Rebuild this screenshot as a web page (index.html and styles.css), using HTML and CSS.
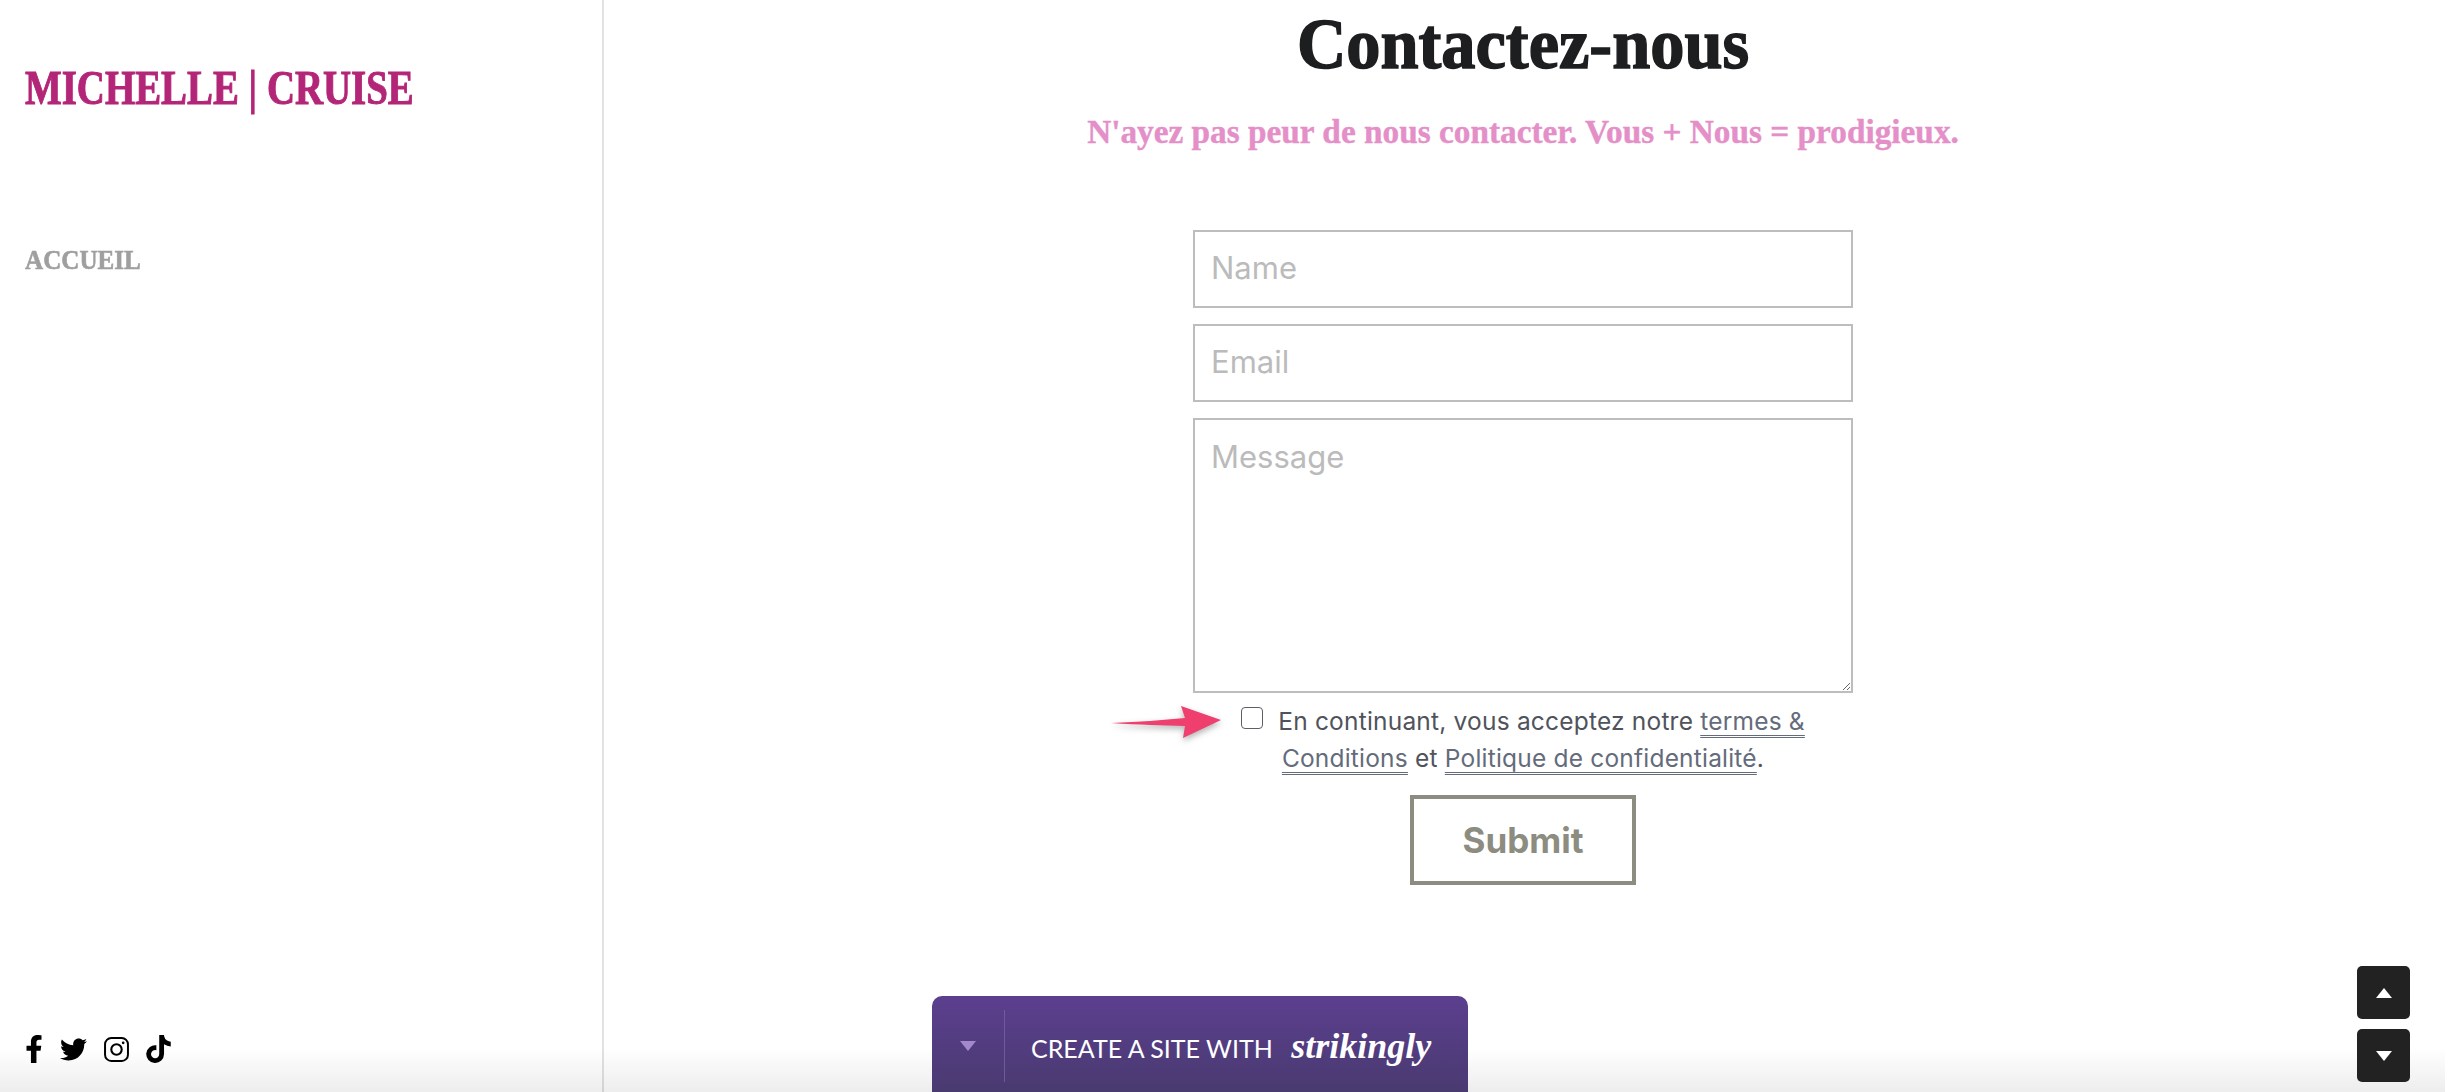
FILE: index.html
```html
<!DOCTYPE html>
<html lang="fr">
<head>
    <meta charset="UTF-8">
    <meta name="viewport" content="width=device-width, initial-scale=1.0">
    <title>Michelle | Cruise - Contactez-nous</title>
    <link rel="stylesheet" href="styles.css">
</head>
<body>

    <div class="page">
        <!-- Sidebar -->
        <aside class="sidebar">
            <div>
                <div class="logo">MICHELLE | CRUISE</div>
                <nav class="nav"><a href="#">ACCUEIL</a></nav>
            </div>
            <div class="social">
                <svg class="icon-fb" viewBox="0 0 320 512"><path d="M279.14 288l14.22-92.66h-88.91v-60.13c0-25.35 12.42-50.06 52.24-50.06h40.42V6.26S260.43 0 225.36 0c-73.22 0-121.08 44.38-121.08 124.72v70.62H22.89V288h81.39v224h100.17V288z"/></svg>
                <svg class="icon-tw" viewBox="0 0 512 512"><path d="M459.37 151.716c.325 4.548.325 9.097.325 13.645 0 138.72-105.583 298.558-298.558 298.558-59.452 0-114.68-17.219-161.137-47.106 8.447.974 16.568 1.299 25.34 1.299 49.055 0 94.213-16.568 130.274-44.832-46.132-.975-84.792-31.188-98.112-72.772 6.498.974 12.995 1.624 19.818 1.624 9.421 0 18.843-1.3 27.614-3.573-48.081-9.747-84.143-51.98-84.143-102.985v-1.299c13.969 7.797 30.214 12.67 47.431 13.319-28.264-18.843-46.781-51.005-46.781-87.391 0-19.492 5.197-37.36 14.294-52.954 51.655 63.675 129.3 105.258 216.365 109.807-1.624-7.797-2.599-15.918-2.599-24.04 0-57.828 46.782-104.934 104.934-104.934 30.213 0 57.502 12.67 76.67 33.137 23.715-4.548 46.456-13.32 66.599-25.34-7.798 24.366-24.366 44.833-46.132 57.827 21.117-2.273 41.584-8.122 60.426-16.243-14.292 20.791-32.161 39.308-52.628 54.253z"/></svg>
                <svg class="icon-ig" viewBox="0 0 24 24"><rect x="1" y="1" width="22" height="22" rx="6" fill="none" stroke="#000" stroke-width="1.9"/><circle cx="12" cy="12" r="5" fill="none" stroke="#000" stroke-width="2"/><circle cx="18.4" cy="5.6" r="1.3"/></svg>
                <svg class="icon-tt" viewBox="0 0 448 512"><path d="M448,209.91a210.06,210.06,0,0,1-122.77-39.25V349.38A162.55,162.55,0,1,1,185,188.31V278.2a74.62,74.62,0,1,0,52.23,71.18V0l88,0a121.18,121.18,0,0,0,1.86,22.17h0A122.18,122.18,0,0,0,381,102.39a121.43,121.43,0,0,0,67,20.14Z"/></svg>
            </div>
        </aside>

        <!-- Contact form -->
        <main class="content">
            <h1 class="title">Contactez-nous</h1>
            <p class="subtitle">N'ayez pas peur de nous contacter. Vous + Nous = prodigieux.</p>

            <form class="form">
                <input class="field" type="text" placeholder="Name">
                <input class="field" type="text" placeholder="Email">
                <textarea class="field message" placeholder="Message"></textarea>

                <div class="consent">
                    <svg class="arrow" viewBox="0 0 112 34"><path d="M0 18 C30 17 50 15 74 13 L70 1 L110 15 L72 33 L74 21 C50 20 30 20 0 18 Z"/></svg>
                    <input class="check" type="checkbox">
                    En continuant, vous acceptez notre <a href="#">termes &amp;</a> <a href="#">Conditions</a> et <a href="#">Politique de confidentialité</a>.
                </div>

                <button class="submit" type="button">Submit</button>
            </form>
        </main>
    </div>

    <!-- Fixed page chrome -->
    <div class="fade"></div>

    <div class="banner">
        <div class="banner-toggle"><span class="caret"></span></div>
        <div class="banner-text">CREATE A SITE WITH <span class="brand">strikingly</span></div>
    </div>

    <div class="scrollers">
        <button class="scroll-btn" type="button"><span class="tri-up"></span></button>
        <button class="scroll-btn" type="button"><span class="tri-down"></span></button>
    </div>

</body>
</html>
```

FILE: styles.css
```css
* {
    box-sizing: border-box;
}

html, body {
    height: 100%;
}

body {
    margin: 0;
    background: white;
    font-family: "Inter", "Liberation Sans", sans-serif;
    overflow: hidden;
}

.page {
    display: flex;
    height: 100vh;
}

/* Sidebar */
.sidebar {
    width: 604px;
    flex-shrink: 0;
    border-right: 2px solid #e2e2e2;
    padding: 60px 25px 28px;
    display: flex;
    flex-direction: column;
    justify-content: space-between;
}

.logo {
    font-family: "Liberation Serif", serif;
    font-weight: bold;
    font-size: 48px;
    line-height: 56px;
    color: #b32577;
    -webkit-text-stroke: 1px #b32577;
    white-space: nowrap;
    transform: scaleX(0.81);
    transform-origin: left center;
}

.nav {
    margin-top: 128px;
}

.nav a {
    display: inline-block;
    font-family: "Liberation Serif", serif;
    font-weight: bold;
    font-size: 27px;
    line-height: 32px;
    color: #9f9f9f;
    text-decoration: none;
    -webkit-text-stroke: 0.6px #9f9f9f;
    transform: scaleX(0.93);
    transform-origin: left center;
}

.social {
    display: flex;
    align-items: center;
    gap: 17px;
    height: 30px;
}

.social svg {
    display: block;
}

.icon-fb {
    width: 18px;
    height: 28px;
}

.icon-tw {
    width: 27px;
    height: 27px;
}

.icon-ig {
    width: 25px;
    height: 25px;
}

.icon-tt {
    width: 25px;
    height: 28px;
}

/* Main */
.content {
    flex: 1;
    display: flex;
    flex-direction: column;
    align-items: center;
    padding-right: 3px;
}

.title {
    margin: 0;
    padding-top: 6px;
    font-family: "Liberation Serif", serif;
    font-weight: bold;
    font-size: 72px;
    line-height: 76px;
    color: #1d1e20;
    -webkit-text-stroke: 1.5px #1d1e20;
    transform: scaleX(0.95);
}

.subtitle {
    margin: 29px 0 0;
    font-family: "Liberation Serif", serif;
    font-weight: bold;
    font-size: 33.3px;
    line-height: 42px;
    color: #e48fc8;
    -webkit-text-stroke: 0.4px #e48fc8;
}

.form {
    width: 660px;
    margin-top: 77px;
    display: flex;
    flex-direction: column;
    align-items: center;
}

.field {
    display: block;
    width: 100%;
    height: 78px;
    margin-bottom: 16px;
    padding: 0 16px 3px;
    border: 2px solid #bdbdbd;
    border-radius: 0;
    background: white;
    font-family: "Inter", "Liberation Sans", sans-serif;
    font-size: 31px;
    color: #444;
    outline: none;
}

.field::placeholder {
    color: #bbbbbb;
    opacity: 1;
}

.message {
    height: 275px;
    margin-bottom: 0;
    padding-top: 18px;
}

.consent {
    position: relative;
    width: 600px;
    margin-top: 10px;
    text-align: center;
    font-size: 24.5px;
    letter-spacing: 0.2px;
    line-height: 37px;
    color: #50535c;
}

.consent a {
    color: #646b7b;
    text-decoration: underline double 1px #646b7b;
    text-underline-offset: 5px;
}

.check {
    appearance: none;
    width: 22px;
    height: 22px;
    margin: 0 8px 0 0;
    vertical-align: 1px;
    background: white;
    border: 1.5px solid #5d5f66;
    border-radius: 4px;
}

.arrow {
    position: absolute;
    left: -112px;
    top: 2px;
    width: 112px;
    height: 34px;
    fill: #ee3f6e;
    filter: drop-shadow(0 3px 3px rgba(0, 0, 0, 0.3));
}

.submit {
    width: 226px;
    height: 90px;
    margin-top: 18px;
    background: white;
    border: 4px solid #8c8c80;
    font-family: "Inter", "Liberation Sans", sans-serif;
    font-weight: bold;
    font-size: 35px;
    color: #8c8c80;
}

/* Fixed stuff */
.fade {
    position: fixed;
    left: 0;
    right: 0;
    bottom: 0;
    height: 44px;
    background: linear-gradient(rgba(0, 0, 0, 0), rgba(0, 0, 0, 0.07));
    pointer-events: none;
}

.banner {
    position: fixed;
    left: 932px;
    bottom: 0;
    width: 536px;
    height: 96px;
    display: flex;
    align-items: center;
    padding: 4px 0 0;
    border-radius: 10px 10px 0 0;
    background: linear-gradient(#5c3f8f, #493a70);
    color: white;
}

.banner-toggle {
    width: 73px;
    height: 72px;
    border-right: 1px solid #70599c;
    display: flex;
    align-items: center;
    justify-content: center;
}

.caret {
    border-left: 8px solid transparent;
    border-right: 8px solid transparent;
    border-top: 10px solid #a388cf;
}

.banner-text {
    margin-left: 26px;
    font-family: "Lato", sans-serif;
    font-size: 25px;
    white-space: nowrap;
}

.brand {
    margin-left: 12px;
    font-family: "Liberation Serif", serif;
    font-style: italic;
    font-weight: bold;
    font-size: 36px;
}

.scrollers {
    position: fixed;
    right: 35px;
    bottom: 10px;
    display: flex;
    flex-direction: column;
    gap: 10px;
}

.scroll-btn {
    width: 53px;
    height: 53px;
    padding: 0;
    border: none;
    border-radius: 5px;
    background: #222222;
    display: flex;
    align-items: center;
    justify-content: center;
}

.tri-up {
    border-left: 8px solid transparent;
    border-right: 8px solid transparent;
    border-bottom: 10px solid white;
}

.tri-down {
    border-left: 8px solid transparent;
    border-right: 8px solid transparent;
    border-top: 10px solid white;
}
```
